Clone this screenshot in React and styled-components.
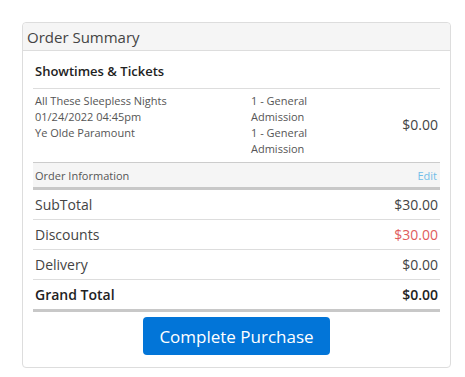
import styled, { createGlobalStyle } from "styled-components";

const GlobalStyle = createGlobalStyle`
  body {
    margin: 0;
    background: #fff;
    font-family: "Open Sans", "Liberation Sans", sans-serif;
    color: #444;
  }
`;

const Page = styled.div`
  padding: 22px;
`;

const Card = styled.div`
  width: 427px;
  border: 1px solid #ddd;
  border-radius: 4px;
  background: #fff;
`;

const CardHeader = styled.div`
  height: 27px;
  border-bottom: 1px solid #ddd;
  background: #f5f5f5;
  border-radius: 4px 4px 0 0;
  padding: 0 4px;
  display: flex;
  align-items: center;
  font-size: 15px;
  color: #444;
`;

const CardBody = styled.div`
  padding: 0 10px 12px;
  display: flex;
  flex-direction: column;
`;

const SectionTitle = styled.div`
  height: 35px;
  border-bottom: 1px solid #ddd;
  padding: 2px 2px 0;
  display: flex;
  align-items: center;
  font-size: 13px;
  font-weight: 600;
  color: #222;
`;

const TicketRow = styled.div`
  display: grid;
  grid-template-columns: 216px 1fr auto;
  align-items: center;
  padding: 4px 2px 5px;
  border-bottom: 1px solid #ccc;
  font-size: 11px;
  line-height: 16px;
  color: #555;
`;

const Lines = styled.div`
  align-self: start;
  display: flex;
  flex-direction: column;
`;

const TicketPrice = styled.div`
  font-size: 14px;
  color: #444;
`;

const InfoRow = styled.div`
  height: 24px;
  background: #f5f5f5;
  border-bottom: 3px solid #c8c8c8;
  padding: 0 3px 0 2px;
  display: flex;
  align-items: center;
  justify-content: space-between;
  font-size: 11px;
  color: #555;
`;

const EditLink = styled.a`
  color: #72bde8;
  text-decoration: none;
  cursor: pointer;
`;

const TotalRow = styled.div`
  height: 29px;
  border-bottom: ${(p) => (p.$grand ? "3px solid #c8c8c8" : "1px solid #ddd")};
  padding: 0 2px;
  display: flex;
  align-items: center;
  justify-content: space-between;
  font-size: 14px;
  font-weight: ${(p) => (p.$grand ? 600 : 400)};
  color: ${(p) => (p.$grand ? "#222" : "#444")};
`;

const Amount = styled.span`
  color: ${(p) => (p.$red ? "#e05c5c" : "inherit")};
`;

const PurchaseButton = styled.button`
  align-self: center;
  margin-top: 5px;
  width: 187px;
  height: 38px;
  border: none;
  border-radius: 4px;
  background: #0275d8;
  color: #fff;
  font-family: inherit;
  font-size: 17px;
  cursor: pointer;
`;

const totals = [
  { label: "SubTotal", value: "$30.00" },
  { label: "Discounts", value: "$30.00", red: true },
  { label: "Delivery", value: "$0.00" },
];

export default function App() {
  return (
    <Page>
      <GlobalStyle />
      <Card>
        <CardHeader>Order Summary</CardHeader>
        <CardBody>
          <SectionTitle>Showtimes &amp; Tickets</SectionTitle>
          <TicketRow>
            <Lines>
              <span>All These Sleepless Nights</span>
              <span>01/24/2022 04:45pm</span>
              <span>Ye Olde Paramount</span>
            </Lines>
            <Lines>
              <span>1 - General</span>
              <span>Admission</span>
              <span>1 - General</span>
              <span>Admission</span>
            </Lines>
            <TicketPrice>$0.00</TicketPrice>
          </TicketRow>
          <InfoRow>
            <span>Order Information</span>
            <EditLink>Edit</EditLink>
          </InfoRow>
          {totals.map((t) => (
            <TotalRow key={t.label}>
              <span>{t.label}</span>
              <Amount $red={t.red}>{t.value}</Amount>
            </TotalRow>
          ))}
          <TotalRow $grand>
            <span>Grand Total</span>
            <Amount>$0.00</Amount>
          </TotalRow>
          <PurchaseButton>Complete Purchase</PurchaseButton>
        </CardBody>
      </Card>
    </Page>
  );
}
